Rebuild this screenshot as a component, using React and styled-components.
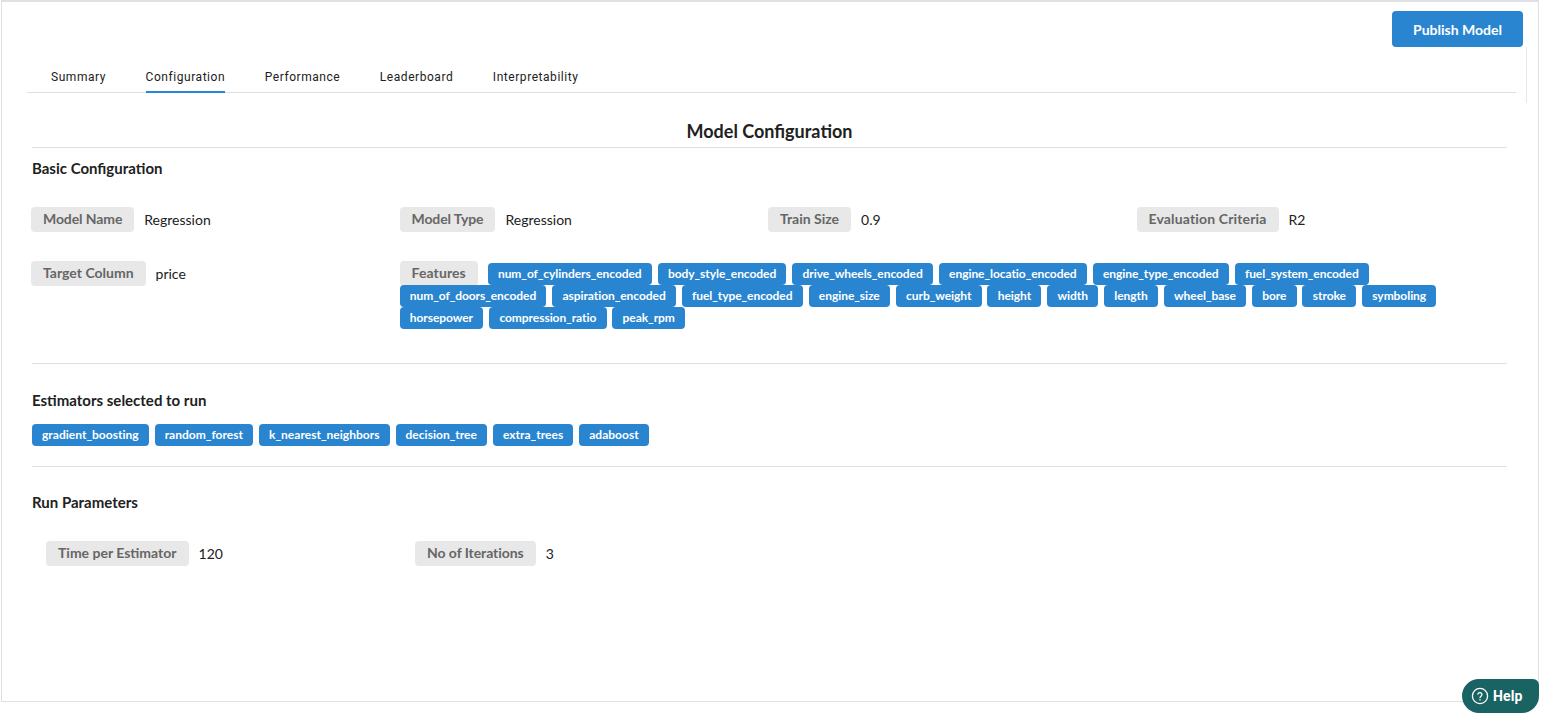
import React from 'react'
import styled, { createGlobalStyle } from 'styled-components'

const GlobalStyle = createGlobalStyle`
  html, body {
    margin: 0;
    padding: 0;
    background: #fff;
    overflow: hidden;
  }
  * {
    box-sizing: border-box;
  }
`

const Frame = styled.div`
  width: 1538px;
  height: 702px;
  margin-left: 1px;
  border: 1px solid #dfe1e5;
  border-top-width: 2px;
  font-family: Lato, sans-serif;
  color: #212121;
`

const TopBar = styled.div`
  display: flex;
  justify-content: flex-end;
  padding: 9px 15px 0 0;
`

const PublishButton = styled.button`
  width: 131px;
  height: 36px;
  border: 0;
  border-radius: 4px;
  background: #2a85d0;
  color: #fff;
  font: 700 14px Lato, sans-serif;
`

const TabsHolder = styled.div`
  width: 1525px;
  height: 56px;
  padding-left: 25px;
  border-right: 1px solid #e8e8e8;
`

const Tabs = styled.div`
  display: flex;
  gap: 39.6px;
  width: 1489px;
  height: 46px;
  padding: 20px 0 0 24px;
  border-bottom: 1px solid #dddfe2;
`

const Tab = styled.div`
  height: 26px;
  font: 400 12px/20px Roboto, sans-serif;
  letter-spacing: 0.55px;
  color: #212121;
  border-bottom: ${(p) => (p.$active ? '2px solid #2a85d0' : '0')};
`

const Content = styled.div`
  width: 1475px;
  margin: 0 0 0 30px;
`

const Title = styled.h2`
  margin: 0;
  height: 45px;
  padding-top: 17px;
  border-bottom: 1px solid #dddfe2;
  text-align: center;
  font: 700 18px/22px Lato, sans-serif;
  color: #212121;
`

const SectionTitle = styled.h3`
  margin: 0;
  font: 700 15px/20px Lato, sans-serif;
  color: #212121;
`

const FieldGrid = styled.div`
  display: grid;
  grid-template-columns: repeat(4, 368.5px);
  margin-left: -1px;
`

const Field = styled.div`
  display: flex;
  align-items: flex-start;
`

const Label = styled.span`
  flex: none;
  height: 25px;
  padding: 0 12px;
  border-radius: 4px;
  background: #e8e8e8;
  color: #666;
  font: 700 14px/24px Lato, sans-serif;
  letter-spacing: ${(p) => p.$spacing || '0'};
`

const Value = styled.span`
  margin-left: 10px;
  font: 400 14px/26px Lato, sans-serif;
  color: #212121;
`

const TagWrap = styled.div`
  display: flex;
  flex-wrap: wrap;
  align-items: flex-start;
  gap: 0 ${(p) => p.$gap || '6px'};
`

const Tag = styled.span`
  height: 22px;
  padding: 0 ${(p) => p.$pad || '10px'};
  border-radius: 4px;
  background: #2a85d0;
  color: #fff;
  font: 700 12px/22px Lato, sans-serif;
  letter-spacing: ${(p) => p.$spacing || '0'};
`

const FeatureLabel = styled(Label)`
  margin: -2px 4px -1px 0;
`

const Divider = styled.hr`
  margin: ${(p) => p.$top} 0 0;
  border: 0;
  border-top: 1px solid #dddfe2;
`

const BasicSection = styled.section`
  padding-top: 10px;
`

const BasicRows = styled.div`
  display: flex;
  flex-direction: column;
  gap: 28px;
  margin-top: 29px;
`

const FeatureField = styled.div`
  grid-column: span 3;
  padding: 2px 20px 0 0;
`

const EstimatorSection = styled.section`
  padding-top: 26px;
`

const EstimatorTags = styled(TagWrap)`
  margin-top: 14px;
`

const RunSection = styled.section`
  padding-top: 25px;
`

const RunGrid = styled.div`
  display: flex;
  margin: 29px 0 0 14px;
`

const RunField = styled(Field)`
  width: 369px;
`

const HelpButton = styled.button`
  position: fixed;
  left: 1462px;
  top: 679px;
  display: flex;
  align-items: center;
  gap: 4px;
  width: 77px;
  height: 34px;
  padding: 0 0 0 9px;
  border: 0;
  border-radius: 17px 6px 17px 17px;
  background: #1a6363;
  color: #fff;
  font: 700 14px Roboto, sans-serif;
  letter-spacing: 0.1px;
`

const features = [
  'num_of_cylinders_encoded',
  'body_style_encoded',
  'drive_wheels_encoded',
  'engine_locatio_encoded',
  'engine_type_encoded',
  'fuel_system_encoded',
  'num_of_doors_encoded',
  'aspiration_encoded',
  'fuel_type_encoded',
  'engine_size',
  'curb_weight',
  'height',
  'width',
  'length',
  'wheel_base',
  'bore',
  'stroke',
  'symboling',
  'horsepower',
  'compression_ratio',
  'peak_rpm',
]

const estimators = [
  'gradient_boosting',
  'random_forest',
  'k_nearest_neighbors',
  'decision_tree',
  'extra_trees',
  'adaboost',
]

const basicFields = [
  ['Model Name', 'Regression', '-0.1px'],
  ['Model Type', 'Regression', '-0.1px'],
  ['Train Size', '0.9'],
  ['Evaluation Criteria', 'R2', '0.15px'],
]

const HelpIcon = () => (
  <svg width='18' height='18' viewBox='0 0 18 18' fill='none' stroke='#fff' strokeWidth='1.3'>
    <circle cx='9' cy='9' r='7.6' />
    <path d='M6.9 7.1a2.1 2.1 0 0 1 4.1.5c0 1.4-2 1.7-2 3' strokeLinecap='round' />
    <circle cx='9' cy='12.8' r='0.5' fill='#fff' strokeWidth='0.5' />
  </svg>
)

const App = () => {
  return (
    <>
      <GlobalStyle />
      <Frame>
        <TopBar>
          <PublishButton>Publish Model</PublishButton>
        </TopBar>
        <TabsHolder>
          <Tabs>
            <Tab>Summary</Tab>
            <Tab $active>Configuration</Tab>
            <Tab>Performance</Tab>
            <Tab>Leaderboard</Tab>
            <Tab>Interpretability</Tab>
          </Tabs>
        </TabsHolder>
        <Content>
          <Title>Model Configuration</Title>
          <BasicSection>
            <SectionTitle>Basic Configuration</SectionTitle>
            <BasicRows>
              <FieldGrid>
                {basicFields.map(([label, value, spacing]) => (
                  <Field key={label}>
                    <Label $spacing={spacing}>{label}</Label>
                    <Value>{value}</Value>
                  </Field>
                ))}
              </FieldGrid>
              <FieldGrid>
                <Field>
                  <Label>Target Column</Label>
                  <Value>price</Value>
                </Field>
                <FeatureField>
                  <TagWrap $gap='5.8px'>
                    <FeatureLabel $spacing='0.1px'>Features</FeatureLabel>
                    {features.map((f) => (
                      <Tag key={f} $spacing='-0.06px' $pad='10.3px'>{f}</Tag>
                    ))}
                  </TagWrap>
                </FeatureField>
              </FieldGrid>
            </BasicRows>
          </BasicSection>
          <Divider $top='34px' />
          <EstimatorSection>
            <SectionTitle>Estimators selected to run</SectionTitle>
            <EstimatorTags>
              {estimators.map((e) => (
                <Tag key={e} $spacing='0.02px'>{e}</Tag>
              ))}
            </EstimatorTags>
          </EstimatorSection>
          <Divider $top='20px' />
          <RunSection>
            <SectionTitle>Run Parameters</SectionTitle>
            <RunGrid>
              <RunField>
                <Label>Time per Estimator</Label>
                <Value>120</Value>
              </RunField>
              <RunField>
                <Label $spacing='-0.06px'>No of Iterations</Label>
                <Value>3</Value>
              </RunField>
            </RunGrid>
          </RunSection>
        </Content>
      </Frame>
      <HelpButton>
        <HelpIcon />
        Help
      </HelpButton>
    </>
  )
}

export default App
